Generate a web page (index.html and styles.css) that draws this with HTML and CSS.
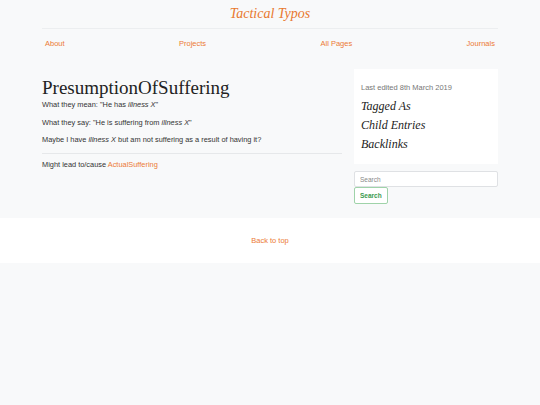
FILE: index.html
```html
<!DOCTYPE html>
<html>
<head>
<meta charset="utf-8">
<link rel="stylesheet" href="styles.css">
</head>
<body>
<div class="page">
  <header class="container">
    <h1 class="site-title"><a href="#">Tactical Typos</a></h1>
    <nav class="nav">
      <a href="#">About</a>
      <a href="#">Projects</a>
      <a href="#">All Pages</a>
      <a href="#">Journals</a>
    </nav>
  </header>
  <main class="container layout">
    <article class="content">
      <h2 class="page-title">PresumptionOfSuffering</h2>
      <p class="first">What they mean: "He has <em>illness X</em>"</p>
      <p>What they say: "He is suffering from <em>illness X</em>"</p>
      <p>Maybe I have <em>illness X</em> but am not suffering as a result of having it?</p>
      <hr>
      <p>Might lead to/cause <a href="#">ActualSuffering</a></p>
    </article>
    <aside class="sidebar">
      <div class="card">
        <p class="meta">Last edited 8th March 2019</p>
        <h3>Tagged As</h3>
        <h3>Child Entries</h3>
        <h3>Backlinks</h3>
      </div>
      <form class="search">
        <input type="text" placeholder="Search">
        <button type="button">Search</button>
      </form>
    </aside>
  </main>
</div>
<footer class="footer">
  <a href="#">Back to top</a>
</footer>
</body>
</html>
```
FILE: styles.css
```css
html, body {
  margin: 0;
  padding: 0;
  background: #f8f9fa;
  font-family: "Liberation Sans", Arial, sans-serif;
  color: #333;
}
a { color: #ec7a35; text-decoration: none; }
.container {
  width: 456px;
  margin: 0 auto;
}
.page { padding-bottom: 14px; }
.site-title {
  margin: 0;
  padding: 6px 0 6px;
  text-align: center;
  font-family: "Liberation Serif", serif;
  font-style: italic;
  font-weight: normal;
  font-size: 14px;
  line-height: 16px;
  border-bottom: 1px solid #eceef0;
}
.site-title a { color: #e8782f; }
.nav {
  display: flex;
  justify-content: space-between;
  padding: 10px 3px 0;
  font-size: 7.5px;
  line-height: 10px;
}
.layout {
  display: flex;
  gap: 12px;
  margin-top: 20px;
}
.content { width: 300px; }
.page-title {
  margin: 8px 0 2px;
  font-family: "Liberation Serif", serif;
  font-weight: normal;
  font-size: 19px;
  line-height: 21px;
  color: #222;
}
.content p {
  margin: 0 0 7.5px;
  font-size: 7.4px;
  line-height: 10px;
}
.content hr {
  border: 0;
  border-top: 1px solid #e6e8ea;
  margin: 4px 0 6px;
}
.sidebar { flex: 1; }
.card {
  background: #fff;
  padding: 14px 7px 8px;
}
.meta {
  margin: 0 0 6px;
  font-size: 7.5px;
  line-height: 10px;
  color: #777;
}
.card h3 {
  margin: 0 0 5px;
  font-family: "Liberation Serif", serif;
  font-style: italic;
  font-weight: normal;
  font-size: 12px;
  line-height: 14px;
  color: #222;
}
.search { margin: 7px 0 0; }
.search input {
  display: block;
  box-sizing: border-box;
  width: 100%;
  height: 16px;
  margin: 0;
  padding: 0 5px;
  border: 1px solid #dfe1e4;
  border-radius: 2px;
  background: #fff;
  font-family: "Liberation Sans", Arial, sans-serif;
  font-size: 6.5px;
  outline: none;
}
.search input::placeholder { color: #888; }
.search button {
  display: block;
  height: 17px;
  padding: 0 5px;
  margin: 0;
  border: 1px solid #9fd3a9;
  border-radius: 2px;
  background: #fff;
  color: #3a9a4e;
  font-family: "Liberation Sans", Arial, sans-serif;
  font-weight: bold;
  font-size: 6.5px;
}
.footer {
  background: #fff;
  height: 45px;
  display: flex;
  align-items: center;
  justify-content: center;
  font-size: 7.5px;
}
```
